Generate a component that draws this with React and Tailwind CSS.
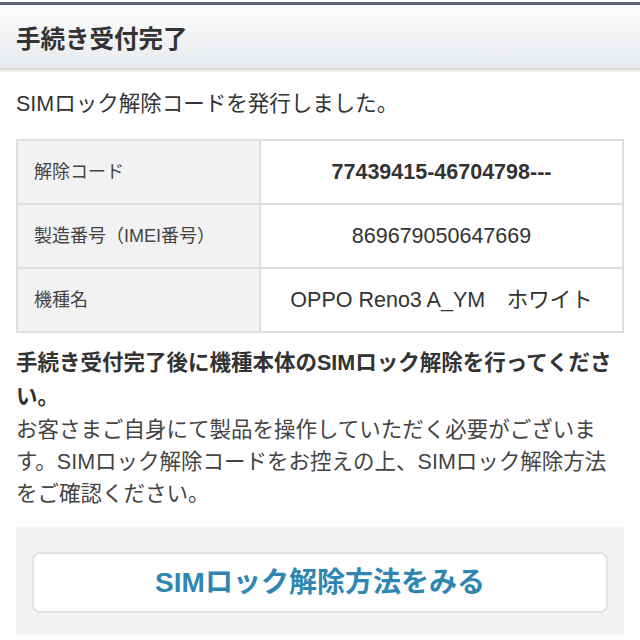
const FONT = { fontFamily: '"Liberation Sans", "Noto Sans CJK JP", sans-serif' }

const ROWS = [
  { label: '解除コード', value: '77439415-46704798---', bold: true },
  { label: '製造番号（IMEI番号）', value: '869679050647669' },
  { label: '機種名', value: 'OPPO Reno3 A_YM　ホワイト' },
]

export default function App() {
  return (
    <div className="w-[640px] h-[640px] overflow-hidden bg-white text-[#333]" style={FONT}>
      {/* ヘッダー */}
      <div className="border-t-2 border-white">
        <div className="h-[3px] bg-[#5f6770]" />
        <div className="h-[63px] bg-gradient-to-b from-[#fbfcfd] to-[#e8ebee] flex items-center px-4 pt-[7px]">
          <h1 className="text-[24.5px] font-bold text-[#333]">手続き受付完了</h1>
        </div>
        <div className="h-[2px] bg-[#d9d9d5]" />
        <div className="h-[2px] bg-[#f0f0ee]" />
      </div>

      <div className="px-4">
        <p className="mt-[16px] text-[21.5px] leading-[32px]">SIMロック解除コードを発行しました。</p>

        {/* 情報テーブル */}
        <table className="mt-[19px] w-full border-collapse">
          <tbody>
            {ROWS.map(row => (
              <tr key={row.label} className="h-[64px]">
                <td className="w-[243px] border-2 border-[#dedede] bg-[#f2f2f2] px-4 text-[18px] text-[#444]">
                  {row.label}
                </td>
                <td className={`border-2 border-[#dedede] text-center text-[21.5px] ${row.bold ? 'font-bold' : ''}`}>
                  {row.value}
                </td>
              </tr>
            ))}
          </tbody>
        </table>

        {/* 注意文 */}
        <div className="mt-[13px] text-[21.5px] leading-[32px] whitespace-nowrap">
          <p className="font-bold leading-[34px]">
            手続き受付完了後に機種本体のSIMロック解除を行ってくださ<br />い。
          </p>
          <p className="text-[#444]">
            お客さまご自身にて製品を操作していただく必要がございま<br />
            す。SIMロック解除コードをお控えの上、SIMロック解除方法<br />
            をご確認ください。
          </p>
        </div>

        {/* ボタン */}
        <div className="mt-[17px] bg-[#f3f4f4] px-4 pt-[25px] pb-[22px]">
          <button className="w-full h-[61px] bg-white border-2 border-[#e2e2e2] rounded-lg text-[28px] font-bold text-[#2f86b1]">
            SIMロック解除方法をみる
          </button>
        </div>
      </div>
    </div>
  )
}
